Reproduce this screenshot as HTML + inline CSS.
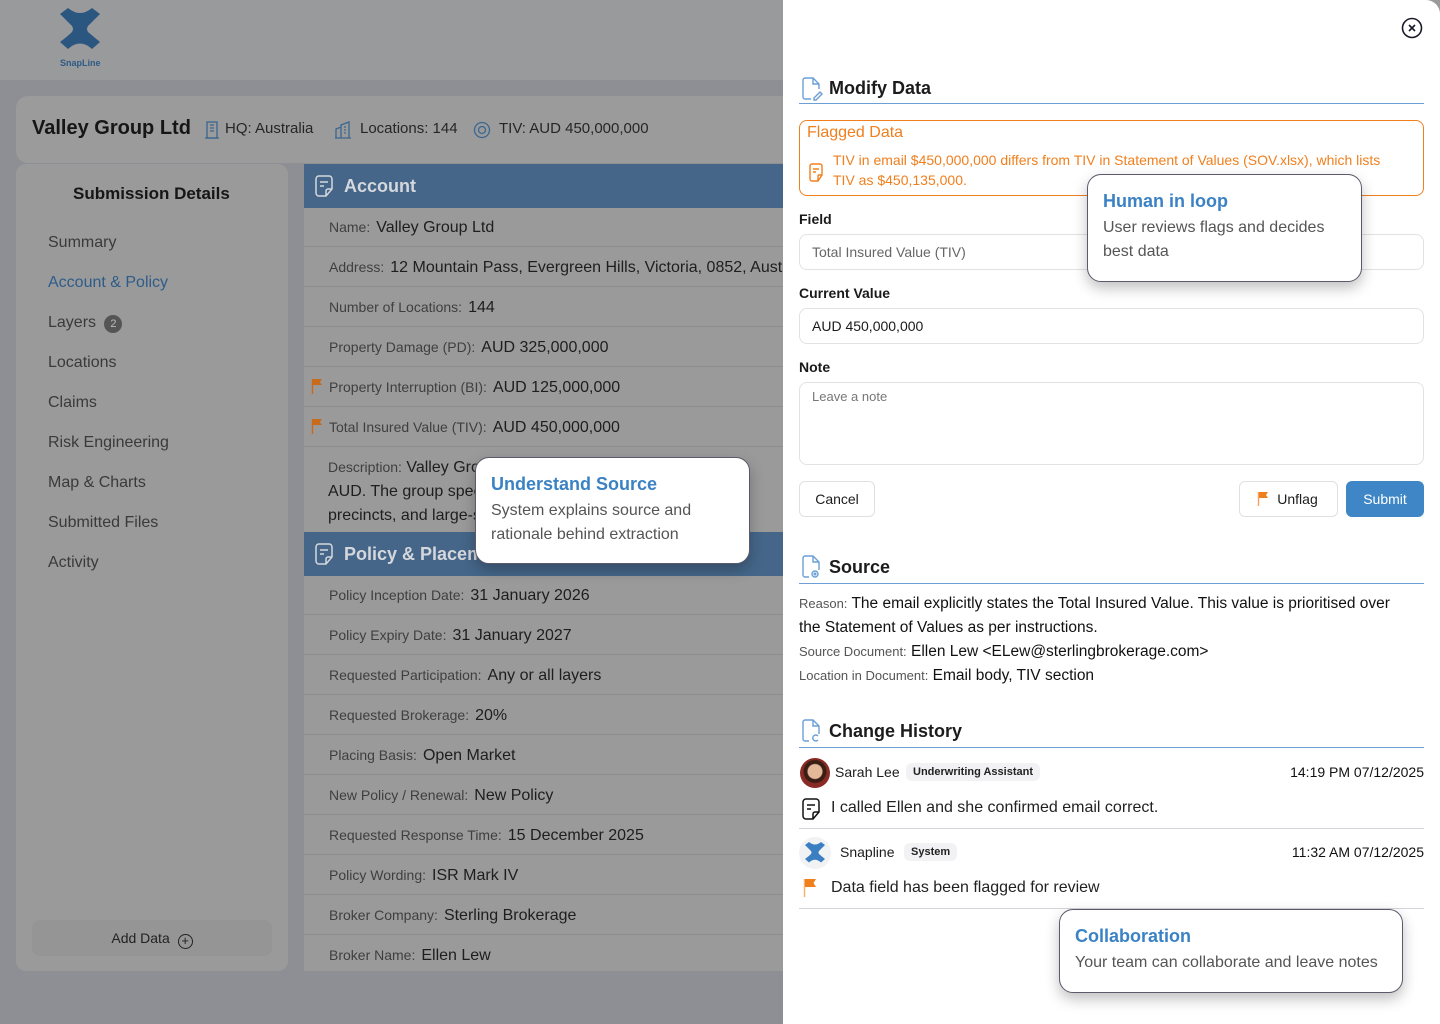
<!DOCTYPE html>
<html><head><meta charset="utf-8"><style>
*{box-sizing:border-box;margin:0;padding:0}
body{width:1440px;height:1024px;position:relative;overflow:hidden;background:#8d8f94;font-family:"Liberation Sans",sans-serif;color:#1c1c1c}
.a{position:absolute;white-space:nowrap}
.top{left:0;top:0;width:1440px;height:80px;background:#999a9b}
.bar{left:16px;top:96px;width:800px;height:67px;background:#9b9b9b;border-radius:12px}
.side{left:16px;top:164px;width:272px;height:807px;background:#9a9a9a;border-radius:10px}
.content{left:304px;top:164px;width:480px;height:807px;background:#9a9a9a}
.hdr{left:304px;width:480px;height:44px;background:#456689;color:#d4d8dd;font-size:18px;font-weight:bold;padding-left:40px;line-height:44px}
.row{left:304px;width:480px;height:40px;border-bottom:1px solid #8d8d8d;font-size:16px;line-height:40px;padding-left:25px;color:#1e1e1e}
.row span{color:#3f3f3f;font-size:14px;margin-right:6px}
.nav{left:48px;font-size:16px;color:#3a3a3a}
.panel{left:783px;top:0;width:657px;height:1024px;background:#fff;border-top-right-radius:14px}
.lab{font-size:14px;font-weight:bold;color:#1a1a1a}
.inp{left:799px;width:625px;border:1px solid #e2e2e2;border-radius:8px;font-size:14px;padding-left:12px}
.sech{left:799px;width:625px;border-bottom:1.5px solid #6b9fd6;font-size:18px;font-weight:bold;padding-left:30px;height:30px}
.tip{background:#fff;border:1px solid #5a5a6a;border-radius:14px;box-shadow:0 6px 14px rgba(0,0,0,.25);padding:16px 15px;white-space:normal}
.tip b{display:block;color:#3b82c4;font-size:18px;margin-bottom:4px}
.tip div{color:#555;font-size:16px;line-height:24px}
.btn{border:1px solid #e0e0e0;border-radius:6px;font-size:14px;text-align:center;line-height:34px;height:36px;background:#fff}
.badge{background:#f2f2f4;border-radius:6px;font-size:11px;font-weight:bold;padding:3px 7px;color:#222}
</style></head><body>
<div class="a top"></div>
<svg class="a" style="left:58px;top:8px" width="44" height="42" viewBox="0 0 44 42"><path d="M2 6 L10 0 Q22 10 34 0 L42 6 Q34 14 30 18 Q28 21 30 24 L42 34 L34 41 Q22 30 10 41 L2 34 Q10 28 14 24 Q16 21 14 18 Z" fill="#2a5680"/></svg>
<div class="a" style="left:60px;top:58px;font-size:9px;font-weight:bold;color:#2f5a85">SnapLine</div>
<div class="a bar"></div>
<div class="a" style="left:32px;top:117px;font-size:20px;font-weight:bold;color:#161616">Valley Group Ltd</div>
<svg class="a" style="left:204px;top:121px" width="16" height="18" viewBox="0 0 16 18" fill="none" stroke="#3b6790" stroke-width="1.3"><rect x="3" y="1" width="10" height="16"/><path d="M6 4h4M6 7h4M6 10h4M1 17h14"/></svg>
<div class="a" style="left:225px;top:120px;font-size:15px;color:#262626">HQ: Australia</div>
<svg class="a" style="left:334px;top:121px" width="18" height="18" viewBox="0 0 18 18" fill="none" stroke="#3b6790" stroke-width="1.3"><path d="M2 17V8l5-2v11M7 17V4l8-3v16M1 17h16M10 6h2M10 9h2M10 12h2"/></svg>
<div class="a" style="left:360px;top:120px;font-size:15px;color:#262626">Locations: 144</div>
<svg class="a" style="left:473px;top:121px" width="18" height="18" viewBox="0 0 18 18" fill="none" stroke="#3b6790" stroke-width="1.3"><circle cx="9" cy="9" r="7.5"/><circle cx="9" cy="9" r="3.5"/></svg>
<div class="a" style="left:499px;top:120px;font-size:15px;color:#262626">TIV: AUD 450,000,000</div>

<div class="a side"></div>
<div class="a" style="left:73px;top:184px;font-size:17px;font-weight:bold;color:#161616">Submission Details</div>
<div class="a nav" style="top:234px">Summary</div>
<div class="a nav" style="top:274px;color:#2e5c8a">Account &amp; Policy</div>
<div class="a nav" style="top:314px">Layers <span style="display:inline-block;width:18px;height:18px;border-radius:9px;background:#555;color:#bbb;font-size:11px;text-align:center;line-height:18px;margin-left:4px">2</span></div>
<div class="a nav" style="top:354px">Locations</div>
<div class="a nav" style="top:394px">Claims</div>
<div class="a nav" style="top:434px">Risk Engineering</div>
<div class="a nav" style="top:474px">Map &amp; Charts</div>
<div class="a nav" style="top:514px">Submitted Files</div>
<div class="a nav" style="top:554px">Activity</div>
<div class="a" style="left:32px;top:920px;width:240px;height:36px;background:#959595;border-radius:8px;text-align:center;line-height:36px;font-size:14px;color:#222">Add Data <span style="display:inline-block;width:15px;height:15px;border:1.3px solid #222;border-radius:8px;line-height:12px;font-size:13px;vertical-align:-2px;margin-left:4px">+</span></div>

<div class="a content"></div>
<div class="a hdr" style="top:164px">Account</div>
<svg class="a" style="left:314px;top:175px" width="20" height="22" viewBox="0 0 20 22" fill="none" stroke="#d4d8dd" stroke-width="1.5"><path d="M18 14V4a3 3 0 0 0-3-3H5a3 3 0 0 0-3 3v14a3 3 0 0 0 3 3h7zM18 14h-4a2 2 0 0 0-2 2v5M6 7h8M6 11h4"/></svg>
<div class="a row" style="top:207px"><span>Name:</span>Valley Group Ltd</div>
<div class="a row" style="top:247px"><span>Address:</span>12 Mountain Pass, Evergreen Hills, Victoria, 0852, Australia</div>
<div class="a row" style="top:287px"><span>Number of Locations:</span>144</div>
<div class="a row" style="top:327px"><span>Property Damage (PD):</span>AUD 325,000,000</div>
<div class="a row" style="top:367px"><span>Property Interruption (BI):</span>AUD 125,000,000</div>
<div class="a row" style="top:407px"><span>Total Insured Value (TIV):</span>AUD 450,000,000</div>
<svg class="a" style="left:311px;top:378px" width="12" height="16" viewBox="0 0 12 16"><path d="M1.5 1v15" stroke="#c86a1c" stroke-width="1.4"/><path d="M2 1h9l-2 3 2 3H2z" fill="#c86a1c"/></svg>
<svg class="a" style="left:311px;top:418px" width="12" height="16" viewBox="0 0 12 16"><path d="M1.5 1v15" stroke="#c86a1c" stroke-width="1.4"/><path d="M2 1h9l-2 3 2 3H2z" fill="#c86a1c"/></svg>
<div class="a" style="left:328px;top:455px;width:456px;overflow:hidden;font-size:16px;line-height:24px;color:#1e1e1e"><span style="font-size:14px;color:#3f3f3f">Description:</span> Valley Group Ltd is a property company op<br>AUD. The group specialises in owning and operating<br>precincts, and large-scale</div>
<div class="a hdr" style="top:532px">Policy &amp; Placement</div>
<svg class="a" style="left:314px;top:543px" width="20" height="22" viewBox="0 0 20 22" fill="none" stroke="#d4d8dd" stroke-width="1.5"><path d="M18 14V4a3 3 0 0 0-3-3H5a3 3 0 0 0-3 3v14a3 3 0 0 0 3 3h7zM18 14h-4a2 2 0 0 0-2 2v5M6 7h8M6 11h4"/></svg>
<div class="a row" style="top:575px"><span>Policy Inception Date:</span>31 January 2026</div>
<div class="a row" style="top:615px"><span>Policy Expiry Date:</span>31 January 2027</div>
<div class="a row" style="top:655px"><span>Requested Participation:</span>Any or all layers</div>
<div class="a row" style="top:695px"><span>Requested Brokerage:</span>20%</div>
<div class="a row" style="top:735px"><span>Placing Basis:</span>Open Market</div>
<div class="a row" style="top:775px"><span>New Policy / Renewal:</span>New Policy</div>
<div class="a row" style="top:815px"><span>Requested Response Time:</span>15 December 2025</div>
<div class="a row" style="top:855px"><span>Policy Wording:</span>ISR Mark IV</div>
<div class="a row" style="top:895px"><span>Broker Company:</span>Sterling Brokerage</div>
<div class="a row" style="top:935px;border:none"><span>Broker Name:</span>Ellen Lew</div>

<div class="a tip" style="left:475px;top:457px;width:275px;height:107px"><b>Understand Source</b><div>System explains source and rationale behind extraction</div></div>

<div class="a panel"></div>
<svg class="a" style="left:1401px;top:17px" width="22" height="22" viewBox="0 0 22 22" fill="none" stroke="#1a1a2a" stroke-width="1.6"><circle cx="11" cy="11" r="9.5"/><path d="M8 8l6 6M14 8l-6 6"/></svg>

<div class="a sech" style="top:74px;line-height:28px">Modify Data</div>
<svg class="a" style="left:801px;top:77px" width="22" height="24" viewBox="0 0 22 24" fill="none" stroke="#6b9fd6" stroke-width="1.4"><path d="M10 22H4a2 2 0 0 1-2-2V3a2 2 0 0 1 2-2h8l6 6v5M12 1v6h6M13 21l6-6 2 2-6 6h-2z"/></svg>
<div class="a" style="left:799px;top:120px;width:625px;height:76px;border:1px solid #f07f1e;border-radius:8px"></div>
<div class="a" style="left:807px;top:124px;font-size:16px;color:#f07f1e">Flagged Data</div>
<div class="a" style="left:833px;top:150px;font-size:14px;line-height:20px;color:#f07f1e">TIV in email $450,000,000 differs from TIV in Statement of Values (SOV.xlsx), which lists<br>TIV as $450,135,000.</div>
<svg class="a" style="left:808px;top:163px" width="16" height="19" viewBox="0 0 16 19" fill="none" stroke="#f07f1e" stroke-width="1.4"><path d="M14 12V3a2 2 0 0 0-2-2H4a2 2 0 0 0-2 2v13a2 2 0 0 0 2 2h6zM14 12h-3a1 1 0 0 0-1 1v5M5 6h6M5 9h3"/></svg>

<div class="a lab" style="left:799px;top:211px">Field</div>
<div class="a inp" style="top:234px;height:36px;line-height:34px;color:#666">Total Insured Value (TIV)</div>
<div class="a lab" style="left:799px;top:285px">Current Value</div>
<div class="a inp" style="top:308px;height:36px;line-height:34px;color:#1a1a1a">AUD 450,000,000</div>
<div class="a lab" style="left:799px;top:359px">Note</div>
<div class="a inp" style="top:382px;height:83px;padding-top:6px;color:#777;font-size:13px">Leave a note</div>
<div class="a tip" style="left:1087px;top:174px;width:275px;height:108px"><b>Human in loop</b><div>User reviews flags and decides best data</div></div>

<div class="a btn" style="left:799px;top:481px;width:76px">Cancel</div>
<div class="a btn" style="left:1239px;top:481px;width:99px;padding-left:18px">Unflag</div>
<svg class="a" style="left:1257px;top:491px" width="12" height="16" viewBox="0 0 12 16"><path d="M1.5 1v14" stroke="#f8a060" stroke-width="1.4"/><path d="M2 1h9l-2 3 2 3H2z" fill="#f07f1e"/></svg>
<div class="a btn" style="left:1346px;top:481px;width:78px;background:#3e86c6;border-color:#3e86c6;color:#fff">Submit</div>

<div class="a sech" style="top:554px;line-height:26px">Source</div>
<svg class="a" style="left:801px;top:555px" width="20" height="24" viewBox="0 0 20 24" fill="none" stroke="#6b9fd6" stroke-width="1.4"><path d="M8 22H4a2 2 0 0 1-2-2V3a2 2 0 0 1 2-2h8l6 6v8M12 1v6h6"/><circle cx="14" cy="19" r="3"/><circle cx="14" cy="19" r=".8"/></svg>
<div class="a" style="left:799px;top:592px;width:630px;white-space:normal;font-size:15.5px;line-height:24px;color:#111"><span style="font-size:13px;color:#555">Reason:</span> The email explicitly states the Total Insured Value. This value is prioritised over<br>the Statement of Values as per instructions.<br><span style="font-size:13px;color:#555">Source Document:</span> Ellen Lew &lt;ELew@sterlingbrokerage.com&gt;<br><span style="font-size:13px;color:#555">Location in Document:</span> Email body, TIV section</div>

<div class="a sech" style="top:718px;line-height:26px">Change History</div>
<svg class="a" style="left:801px;top:719px" width="20" height="24" viewBox="0 0 20 24" fill="none" stroke="#6b9fd6" stroke-width="1.4"><path d="M8 22H4a2 2 0 0 1-2-2V3a2 2 0 0 1 2-2h8l6 6v8M12 1v6h6"/><path d="M17 17a3 3 0 1 0 0 4"/></svg>
<div class="a" style="left:800px;top:758px;width:30px;height:30px;border-radius:15px;background:radial-gradient(circle at 50% 45%,#e6b89a 0 7px,#3a1e14 8px 11px,#8a2a24 12px)"></div>
<div class="a" style="left:835px;top:764px;font-size:14px">Sarah Lee</div>
<div class="a badge" style="left:906px;top:763px">Underwriting Assistant</div>
<div class="a" style="right:16px;top:764px;font-size:14px;color:#111">14:19 PM 07/12/2025</div>
<svg class="a" style="left:801px;top:798px" width="20" height="22" viewBox="0 0 20 22" fill="none" stroke="#111" stroke-width="1.5"><path d="M18 14V4a3 3 0 0 0-3-3H5a3 3 0 0 0-3 3v14a3 3 0 0 0 3 3h7zM18 14h-4a2 2 0 0 0-2 2v5M6 7h8M6 11h4"/></svg>
<div class="a" style="left:831px;top:799px;font-size:16px;color:#222">I called Ellen and she confirmed email correct.</div>
<div class="a" style="left:799px;top:828px;width:625px;border-top:1px solid #d4d4da"></div>
<div class="a" style="left:799px;top:837px;width:32px;height:32px;border-radius:16px;background:#f1f2f4"></div>
<svg class="a" style="left:804px;top:842px" width="22" height="21" viewBox="0 0 44 42"><path d="M2 6 L10 0 Q22 10 34 0 L42 6 Q34 14 30 18 Q28 21 30 24 L42 34 L34 41 Q22 30 10 41 L2 34 Q10 28 14 24 Q16 21 14 18 Z" fill="#3b7fc2"/></svg>
<div class="a" style="left:840px;top:844px;font-size:14px">Snapline</div>
<div class="a badge" style="left:904px;top:843px">System</div>
<div class="a" style="right:16px;top:844px;font-size:14px;color:#111">11:32 AM 07/12/2025</div>
<svg class="a" style="left:803px;top:878px" width="14" height="20" viewBox="0 0 14 20"><path d="M1.5 1v18" stroke="#f8b070" stroke-width="1.5"/><path d="M2 1h11l-2.5 4 2.5 4H2z" fill="#f07f1e"/></svg>
<div class="a" style="left:831px;top:879px;font-size:16px;color:#222">Data field has been flagged for review</div>
<div class="a" style="left:799px;top:908px;width:625px;border-top:1px solid #d4d4da"></div>
<div class="a tip" style="left:1059px;top:909px;width:344px;height:84px"><b>Collaboration</b><div>Your team can collaborate and leave notes</div></div>
</body></html>
